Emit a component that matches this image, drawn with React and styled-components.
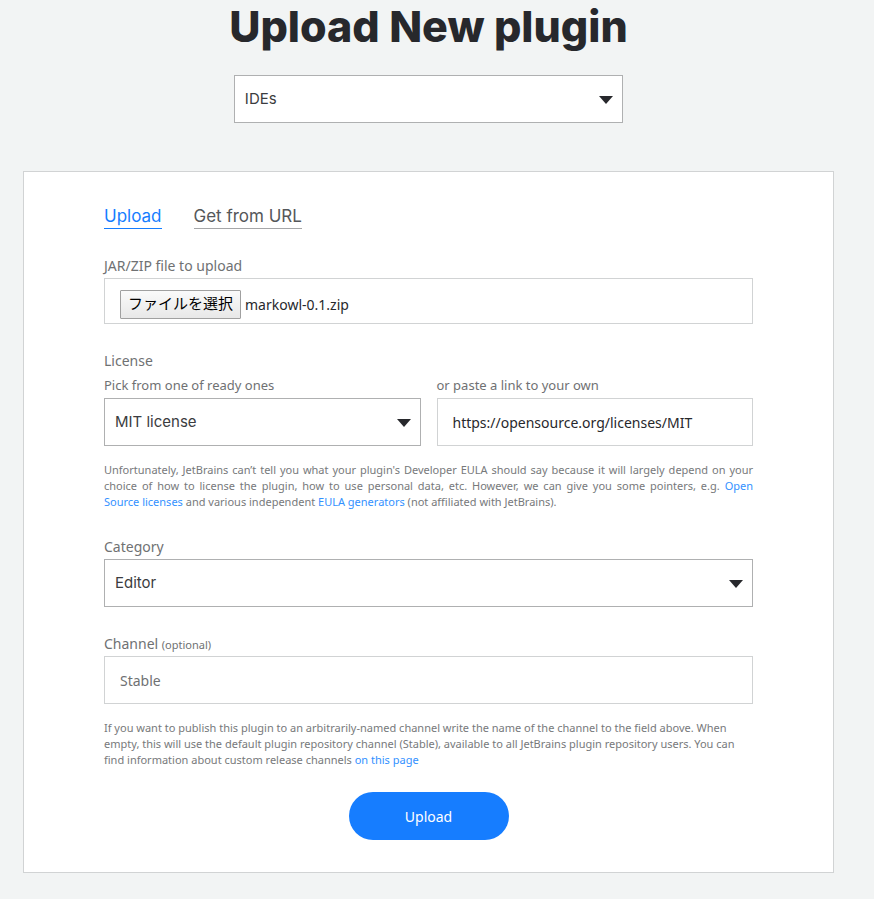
import React, { useRef, useState } from 'react';
import styled, { createGlobalStyle } from 'styled-components';

const TEXT_FONT = '"Noto Sans", "Open Sans", "Noto Sans CJK JP", sans-serif';
const BRAND_FONT = 'Inter, "Open Sans", sans-serif';

const GlobalStyle = createGlobalStyle`
  *, *::before, *::after { box-sizing: border-box; }
  body {
    margin: 0;
    background: #f2f4f4;
    color: #27282c;
    font-family: ${TEXT_FONT};
    font-size: 14px;
  }
  button, input, select { font: inherit; color: inherit; margin: 0; }
`;

const Page = styled.main`
  display: flex;
  flex-direction: column;
  align-items: center;
  padding: 2px 40px 26px 23px;
`;

const Title = styled.h1`
  margin: 0 0 25px;
  font: 800 43px/48px ${BRAND_FONT};
`;

const ProductPicker = styled.div`
  width: 48%;
  margin-bottom: 48px;
`;

const Card = styled.form`
  width: 100%;
  padding: 32px 80px;
  background: #fff;
  border: 1px solid #d1d3d4;
`;

const Tabs = styled.div`
  display: flex;
  gap: 32px;
`;

const Tab = styled.button`
  padding: 0;
  border: 0;
  border-bottom: 1px solid ${(p) => (p.$active ? '#167dff' : '#a5a6a8')};
  background: none;
  color: ${(p) => (p.$active ? '#167dff' : '#55575a')};
  font: 400 17px/24px ${BRAND_FONT};
  cursor: pointer;
`;

const Section = styled.section`
  margin-top: 24px;
`;

const Label = styled.label`
  display: block;
  color: #6f7173;
  font-size: ${(p) => (p.$small ? '13px' : '14px')};
  line-height: 25px;
`;

const Optional = styled.small`
  font-size: 11px;
  line-height: 16px;
`;

const Columns = styled.div`
  display: grid;
  grid-template-columns: 1fr 1fr;
  gap: 16px;
`;

const SelectFrame = styled.div`
  position: relative;
`;

const Select = styled.select`
  display: block;
  width: 100%;
  height: 48px;
  padding: 0 40px 0 10px;
  appearance: none;
  border: 1px solid #afb0b1;
  border-radius: 0;
  background: #fff;
  color: #3b3c40;
  font: 400 15px/20px ${BRAND_FONT};
`;

const Arrow = styled.svg`
  position: absolute;
  top: 21px;
  right: 10px;
  width: 14px;
  height: 8px;
  fill: #27282c;
  pointer-events: none;
`;

const TextInput = styled.input`
  display: block;
  width: 100%;
  height: 48px;
  padding: 0 15px;
  border: 1px solid #d1d3d4;
  border-radius: 0;
  background: #fff;
  &::placeholder { color: #6f7173; opacity: 1; }
`;

const FileField = styled.div`
  display: flex;
  align-items: center;
  gap: 4px;
  height: 46px;
  padding: 6px 15px 0;
  border: 1px solid #d1d3d4;
`;

const FileButton = styled.button`
  height: 29px;
  padding: 0 7px 2px;
  border: 1px solid #a0a0a0;
  border-radius: 1px;
  background: linear-gradient(#fafafa, #e8e8e8);
  color: #000;
  font: 400 15px/24px "Noto Sans CJK JP", sans-serif;
`;

const Note = styled.p`
  margin: 16px 0 0;
  color: #77797b;
  font-size: 11px;
  line-height: 16px;
  text-align: ${(p) => (p.$justified ? 'justify' : 'left')};
`;

const Link = styled.a`
  color: #3391ff;
  text-decoration: none;
`;

const Submit = styled.button`
  display: block;
  width: 160px;
  height: 48px;
  margin: 24px auto 0;
  border: 0;
  border-radius: 24px;
  background: #167dff;
  color: #fff;
  cursor: pointer;
`;

function Dropdown({ options, ...rest }) {
  return (
    <SelectFrame>
      <Select {...rest}>
        {options.map((o) => (
          <option key={o}>{o}</option>
        ))}
      </Select>
      <Arrow viewBox="0 0 14 8" aria-hidden="true">
        <path d="M0 0H14L7 8Z" />
      </Arrow>
    </SelectFrame>
  );
}

export default function App() {
  const [tab, setTab] = useState('Upload');
  const [fileName, setFileName] = useState('markowl-0.1.zip');
  const fileRef = useRef(null);

  return (
    <>
      <GlobalStyle />
      <Page>
        <Title>Upload New plugin</Title>
        <ProductPicker>
          <Dropdown aria-label="Product" options={['IDEs']} />
        </ProductPicker>
        <Card onSubmit={(e) => e.preventDefault()}>
          <Tabs role="tablist">
            {['Upload', 'Get from URL'].map((name) => (
              <Tab
                key={name}
                type="button"
                role="tab"
                aria-selected={tab === name}
                $active={tab === name}
                onClick={() => setTab(name)}
              >
                {name}
              </Tab>
            ))}
          </Tabs>

          <Section>
            <Label htmlFor="file">JAR/ZIP file to upload</Label>
            <FileField>
              <input
                id="file"
                type="file"
                hidden
                ref={fileRef}
                onChange={(e) => e.target.files[0] && setFileName(e.target.files[0].name)}
              />
              <FileButton type="button" onClick={() => fileRef.current.click()}>
                ファイルを選択
              </FileButton>
              <span>{fileName}</span>
            </FileField>
          </Section>

          <Section>
            <Label as="div">License</Label>
            <Columns>
              <div>
                <Label $small htmlFor="license">Pick from one of ready ones</Label>
                <Dropdown id="license" options={['MIT license']} />
              </div>
              <div>
                <Label $small htmlFor="license-url">or paste a link to your own</Label>
                <TextInput id="license-url" defaultValue="https://opensource.org/licenses/MIT" />
              </div>
            </Columns>
            <Note $justified>
              Unfortunately, JetBrains can’t tell you what your plugin's Developer EULA should say
              because it will largely depend on your choice of how to license the plugin, how to use
              personal data, etc. However, we can give you some pointers, e.g.{' '}
              <Link href="#licenses">Open Source&nbsp;licenses</Link> and various independent{' '}
              <Link href="#eula">EULA generators</Link> (not affiliated with JetBrains).
            </Note>
          </Section>

          <Section>
            <Label htmlFor="category">Category</Label>
            <Dropdown id="category" options={['Editor']} />
          </Section>

          <Section>
            <Label htmlFor="channel">
              Channel <Optional>(optional)</Optional>
            </Label>
            <TextInput id="channel" placeholder="Stable" />
            <Note>
              If you want to publish this plugin to an arbitrarily-named channel write the name of
              the channel to the field above. When empty, this will use the default plugin
              repository channel (Stable), available to all JetBrains plugin repository users. You
              can find information about custom release channels{' '}
              <Link href="#channels">on this page</Link>
            </Note>
          </Section>

          <Submit type="submit">Upload</Submit>
        </Card>
      </Page>
    </>
  );
}
